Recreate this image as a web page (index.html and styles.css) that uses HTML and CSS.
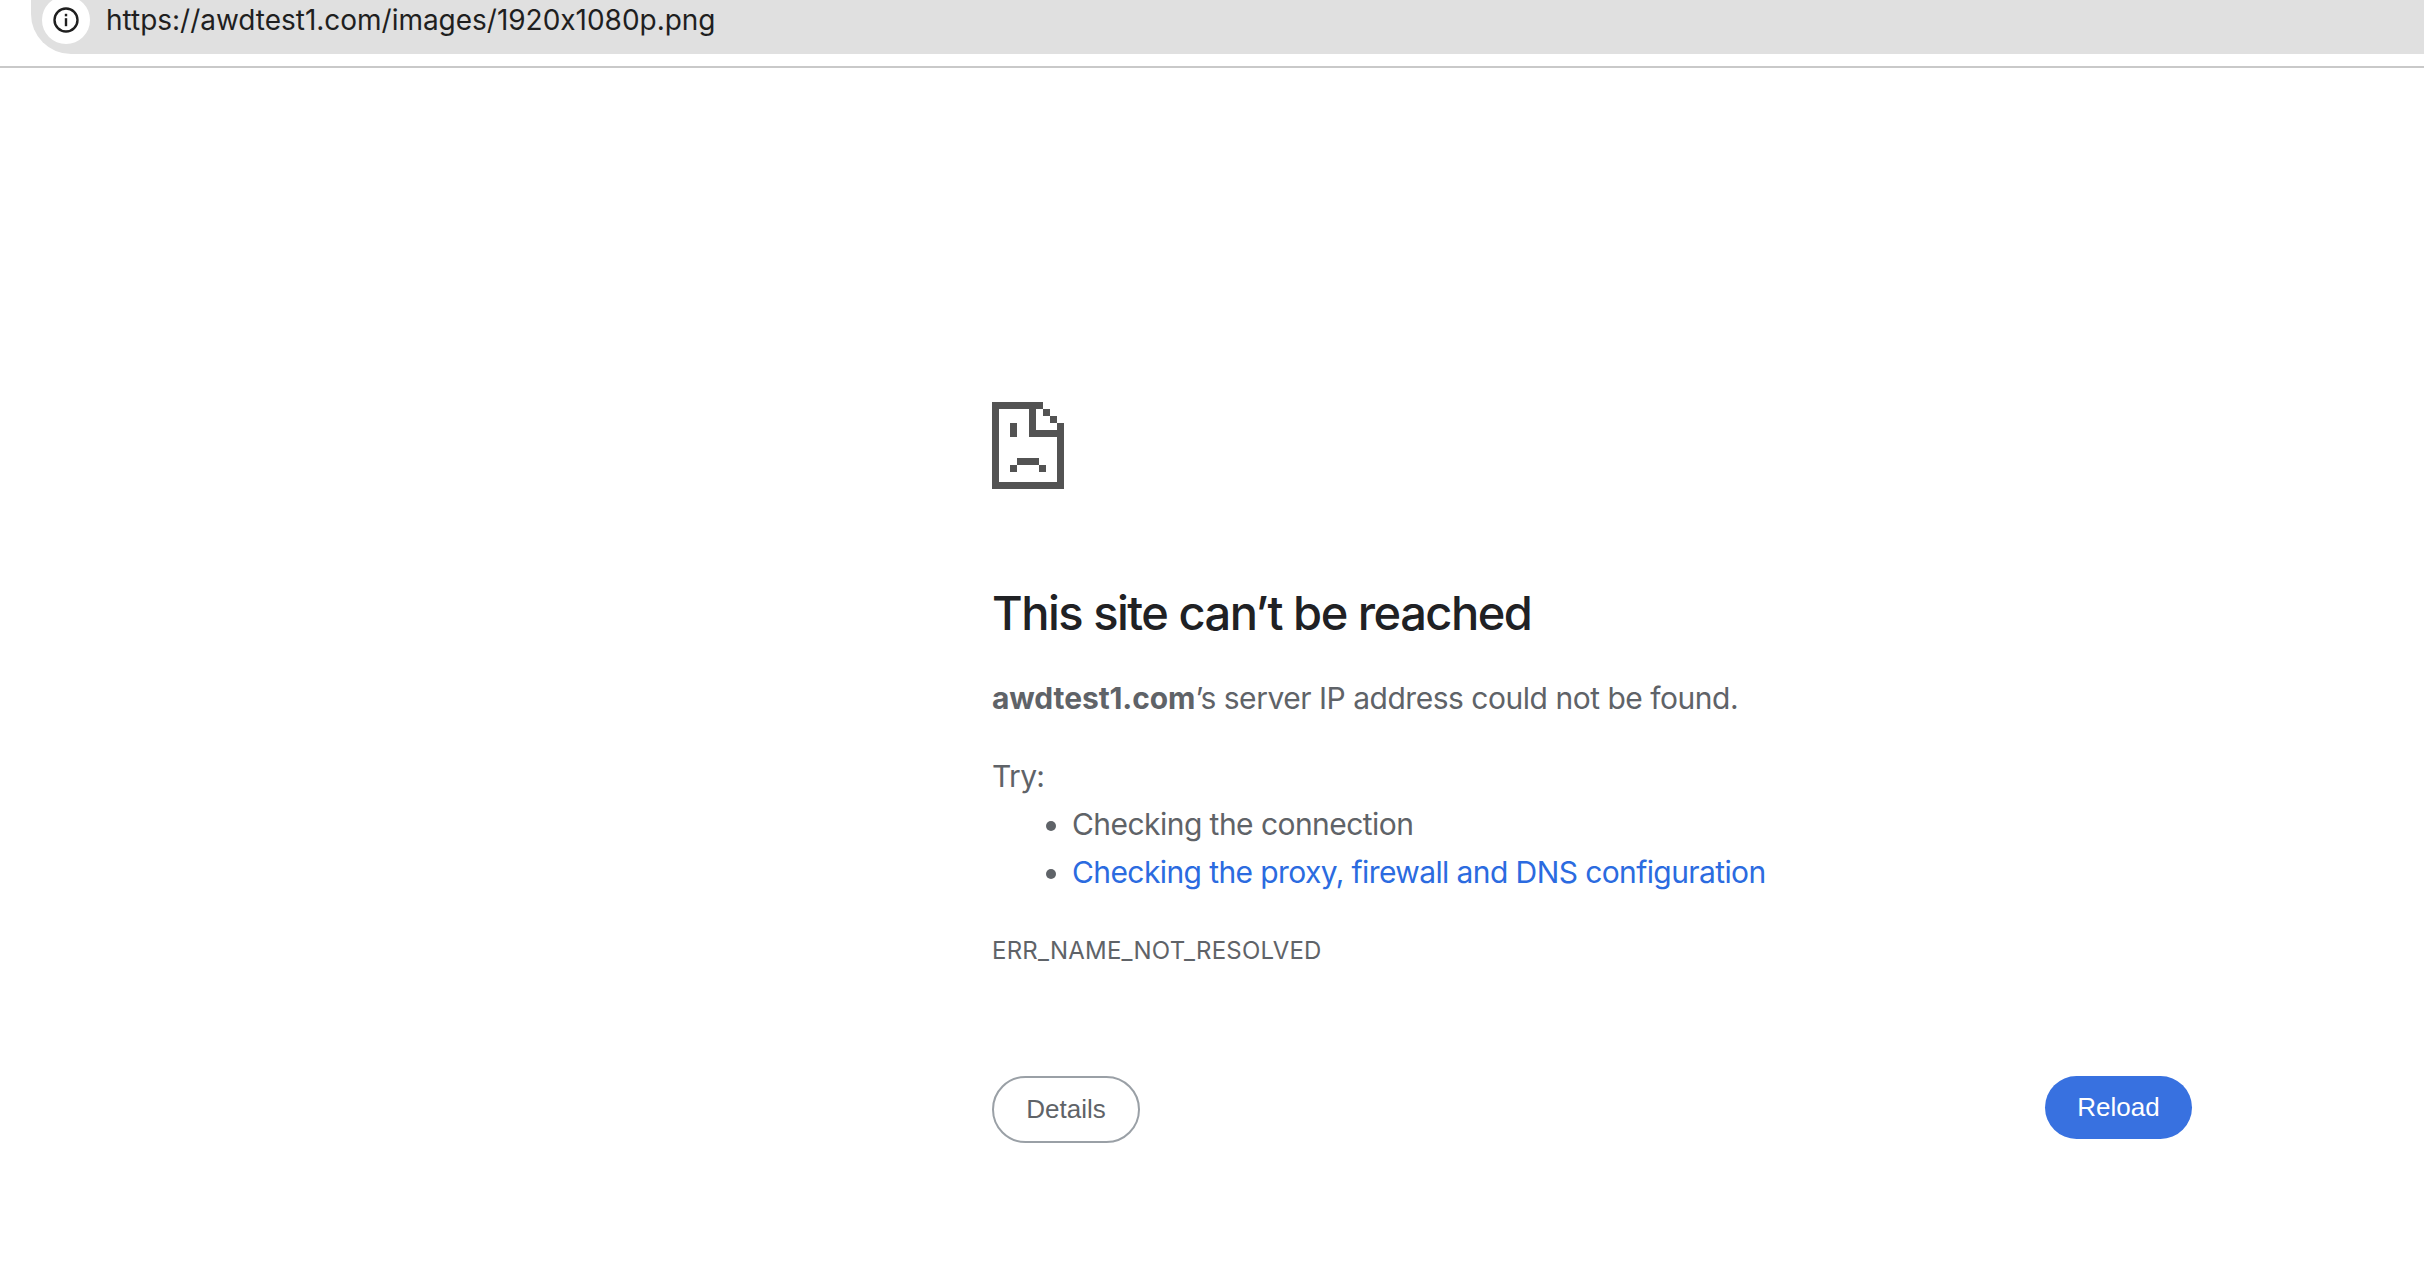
FILE: index.html
```html
<!DOCTYPE html>
<html lang="en">
<head>
<meta charset="utf-8">
<title>awdtest1.com</title>
<link rel="stylesheet" href="styles.css">
</head>
<body>
<header class="toolbar">
  <div class="omnibox">
    <span class="site-chip">
      <svg class="info-icon" viewBox="0 0 26 26" width="26" height="26" aria-hidden="true">
        <circle cx="13" cy="13" r="11.5" fill="none" stroke="#1f1f1f" stroke-width="2.4"/>
        <rect x="11.8" y="11.2" width="2.4" height="8" fill="#1f1f1f"/>
        <rect x="11.8" y="6.8" width="2.4" height="2.5" fill="#1f1f1f"/>
      </svg>
    </span>
    <span class="url">https://awdtest1.com/images/1920x1080p.png</span>
  </div>
</header>
<main class="wrapper">
  <svg class="sad-file" viewBox="0 0 72 87" width="72" height="87" aria-hidden="true" shape-rendering="crispEdges">
    <path fill="#535353" d="M0 0H51V7H44V28H65V21H72V87H0ZM7 7V80H65V35H37V7ZM51 7H58V14H51ZM58 14H65V21H58ZM18 21H25V35H18ZM25 56H47V63H25ZM18 63H25V70H18ZM47 63H54V70H47Z" fill-rule="evenodd"/>
  </svg>
  <h1 class="title">This site can’t be reached</h1>
  <p class="summary"><strong>awdtest1.com</strong>’s server IP address could not be found.</p>
  <p class="try">Try:</p>
  <ul class="suggestions">
    <li>Checking the connection</li>
    <li><a href="#proxy">Checking the proxy, firewall and DNS configuration</a></li>
  </ul>
  <div class="code">ERR_NAME_NOT_RESOLVED</div>
  <div class="actions">
    <button class="btn details" type="button">Details</button>
    <button class="btn reload" type="button">Reload</button>
  </div>
</main>
</body>
</html>
```
FILE: styles.css
```css
* { box-sizing: border-box; }
html, body { margin: 0; background: #fff; }
body { height: 1272px; overflow: hidden; font-family: Inter, "Liberation Sans", sans-serif; color: #5f6368; font-variant-ligatures: no-contextual; }

.toolbar { height: 68px; padding-left: 31px; border-bottom: 2px solid #c9c9c9; }
.omnibox {
  height: 54px; background: #e0e0e0; border-radius: 0 0 0 40px;
  display: flex; align-items: center; padding-left: 11px;
  overflow: hidden;
}
.site-chip {
  width: 48px; height: 48px; border-radius: 50%; background: #fff; flex: none;
  display: flex; align-items: center; justify-content: center;
  margin-top: -14px; margin-right: 16px;
}
.url { font-size: 28px; letter-spacing: -0.02px; color: #1f1f1f; margin-top: -14px; }

.wrapper { width: 1200px; margin-left: 992px; padding-top: 334px; }
.sad-file { display: block; }
.title { margin: 96px 0 0; font-size: 47px; line-height: 56px; font-weight: 500; letter-spacing: -1.5px; color: #202124; }
.summary { margin: 33px 0 0; font-size: 30px; line-height: 48px; letter-spacing: -0.48px; }
.summary strong { font-weight: 700; letter-spacing: -0.1px; }
.try { margin: 30px 0 0; font-size: 30px; line-height: 48px; letter-spacing: -0.65px; }
.suggestions { margin: 0; padding-left: 80px; font-size: 30px; line-height: 48px; letter-spacing: -0.55px; }
.suggestions a { color: #2b6be0; letter-spacing: -0.6px; text-decoration: none; }
.code { margin-top: 39px; font-size: 24px; line-height: 32px; letter-spacing: 0.22px; }
.actions { display: flex; justify-content: space-between; align-items: flex-start; margin-top: 109px; }
.btn { font-family: "Liberation Sans", Arial, sans-serif; font-size: 26px; border-radius: 34px; padding: 0; }
.details { width: 148px; height: 67px; background: #fff; border: 2px solid #9aa0a6; color: #5f6368; }
.reload { width: 147px; height: 63px; background: #3871e0; border: 0; color: #fff; }
```
